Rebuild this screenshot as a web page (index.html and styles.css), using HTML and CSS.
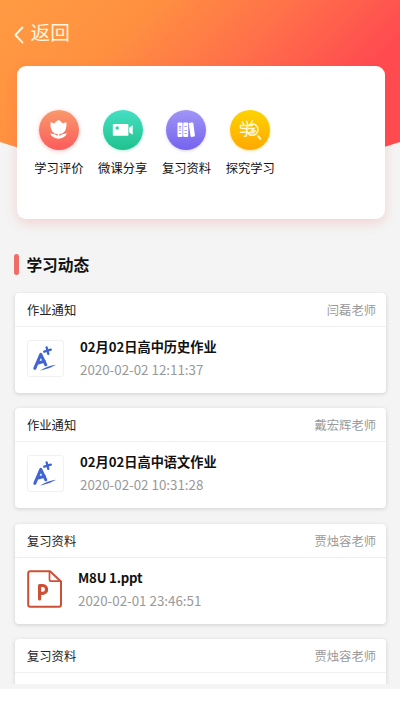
FILE: index.html
```html
<!DOCTYPE html>
<html lang="zh-CN">
<head>
<meta charset="utf-8">
<title>学习动态</title>
<link rel="stylesheet" href="styles.css">
</head>
<body>
<div class="page">
  <div class="backdrop"></div>
  <header class="nav">
    <svg class="chevron" width="10" height="18" viewBox="0 0 10 18"><path d="M8.4 1.5 1.4 9l7 7.4"/></svg>
    <span>返回</span>
  </header>
  <nav class="menu">
    <div class="entry">
      <div class="disc coral"><svg width="40" height="40" viewBox="0 0 40 40">
        <path fill="#fff" d="M11.600 12.200c1.500.1 2.700.6 3.700 1.400.9-1.600 2.400-2.900 4.200-3.600 1.800.7 3.300 2 4.200 3.600 1-.8 2.200-1.300 3.700-1.400.5 6.600-1.200 11.200-7 11.800v2c1.600-1.600 4-2.500 7.600-2.500-1.700 3.300-4.700 5.100-8.500 5.200-3.800-.1-6.800-1.900-8.500-5.200 3.600 0 6 .9 7.600 2.500v-2c-5.800-.6-7.500-5.200-7-11.800z"/></svg></div>
      <span>学习评价</span>
    </div>
    <div class="entry">
      <div class="disc green"><svg width="40" height="40" viewBox="0 0 40 40">
        <path fill="#fff" fill-rule="evenodd" d="M10.500 14h14.200q.7 0 .7.700v10.400q0 .7-.7.700H10.500q-.7 0-.7-.7V14.700q0-.7.700-.7zm3.700 2.300a1.700 1.700 0 1 0 0 3.400 1.700 1.700 0 0 0 0-3.400zM29.700 15.300v9.400l-3.400-2.200v-5z"/></svg></div>
      <span>微课分享</span>
    </div>
    <div class="entry">
      <div class="disc violet"><svg width="40" height="40" viewBox="0 0 40 40">
        <g fill="#fff"><rect x="11.500" y="12.600" width="5" height="14.400" rx="1"/><rect x="17.200" y="12.600" width="5" height="14.400" rx="1"/><rect x="23.700" y="12.600" width="4.500" height="14.200" rx="1" transform="rotate(-8 26 20)"/></g>
        <path fill="none" stroke="#7d70ed" stroke-width=".7" d="M12.800 16.500h2.400M12.800 18h2.400M12.800 20.200h2.400M12.800 23.500h2.400M18.500 16.500h2.400M18.500 20.500h2.400M18.500 23.500h2.400"/></svg></div>
      <span>复习资料</span>
    </div>
    <div class="entry">
      <div class="disc gold"><svg width="40" height="40" viewBox="0 0 40 40">
        <g fill="none" stroke="#fff7d0" stroke-width="1.500" stroke-linecap="round"><path d="M12.500 12.200l1.200 2.500M16.600 11.300l1 3M22.300 11l-2 3.500M10.400 18v-2.500h12M11.500 18.500h7M10.300 22.200h8M16.500 18.500v6.800q0 1.200-2 .8M19 18.500h5l-2.500 2.500h4M19 22.800h5"/><circle cx="22.300" cy="19.600" r="5.700"/><path stroke-width="2" d="M28.200 26.200l2.200 2.600"/></g></svg></div>
      <span>探究学习</span>
    </div>
  </nav>
  <h2 class="section">学习动态</h2>
  <main class="feed">
    <article class="card">
      <div class="card-head"><span>作业通知</span><span class="teacher">闫磊老师</span></div>
      <div class="card-body">
        <div class="thumb"><svg width="36" height="36" viewBox="0 0 36 36"><g fill="none" stroke="#4065d2" stroke-linecap="round" stroke-linejoin="round"><path stroke-width="3" d="M6.800 27.300 12.800 13.300 17.800 23.800M9 22.300l7.500-2"/><path stroke-width="2.300" d="M18.600 6.300l1.700 6.600M16.200 10.600l6.600-2"/></g><path fill="#4065d2" d="M12 29.800q7-5 16.300-6-7 4.200-16.300 6z"/></svg></div>
        <div class="info"><h3>02月02日高中历史作业</h3><time>2020-02-02 12:11:37</time></div>
      </div>
    </article>
    <article class="card">
      <div class="card-head"><span>作业通知</span><span class="teacher">戴宏辉老师</span></div>
      <div class="card-body">
        <div class="thumb"><svg width="36" height="36" viewBox="0 0 36 36"><g fill="none" stroke="#4065d2" stroke-linecap="round" stroke-linejoin="round"><path stroke-width="3" d="M6.800 27.300 12.800 13.300 17.800 23.800M9 22.300l7.500-2"/><path stroke-width="2.300" d="M18.600 6.300l1.700 6.600M16.200 10.600l6.600-2"/></g><path fill="#4065d2" d="M12 29.800q7-5 16.300-6-7 4.200-16.300 6z"/></svg></div>
        <div class="info"><h3>02月02日高中语文作业</h3><time>2020-02-02 10:31:28</time></div>
      </div>
    </article>
    <article class="card">
      <div class="card-head"><span>复习资料</span><span class="teacher">贾烛容老师</span></div>
      <div class="card-body file">
        <svg class="ppt" width="36" height="38" viewBox="0 0 36 38"><g fill="none" stroke="#cb5036" stroke-width="2" stroke-linejoin="round"><path d="M3.200 1.300H23L34 11.500V34.800q0 2-2 2H3.200q-2 0-2-2V3.300q0-2 2-2z"/><path stroke-width="1.700" d="M22.500 1.800v7.700q0 1.700 1.700 1.700h9.300"/></g><path fill="none" stroke="#cb5036" stroke-width="3.200" stroke-linecap="round" stroke-linejoin="round" d="M12.600 29V15.500h3.200c5 0 5 7.800 0 7.800h-3.200"/></svg>
        <div class="info"><h3>M8U 1.ppt</h3><time>2020-02-01 23:46:51</time></div>
      </div>
    </article>
    <article class="card">
      <div class="card-head"><span>复习资料</span><span class="teacher">贾烛容老师</span></div>
      <div class="card-body"></div>
    </article>
  </main>
</div>
</body>
</html>
```

FILE: styles.css
```css
* { box-sizing: border-box; margin: 0; padding: 0; }
body {
  height: 711px;
  overflow: hidden;
  background: #fff;
  color: #111;
  font-family: "Noto Sans CJK SC", sans-serif;
}
.page {
  position: relative;
  height: 689px;
  overflow: hidden;
  background: #f4f4f4;
}
.backdrop {
  position: absolute;
  inset: 0 0 auto;
  height: 205px;
  background: linear-gradient(135deg, #ff9a42 0%, #ff9141 25%, #ff704a 49%, #ff4b50 72%, #ff4b50 100%);
  clip-path: polygon(0 0, 100% 0, 100% 142px, 50% 205px, 0 142px);
}
.nav {
  position: relative;
  display: flex;
  align-items: center;
  gap: 6.500px;
  height: 66px;
  padding-left: 14px;
  color: #fff5dc;
  font-size: 19.700px;
  line-height: 30px;
}
.nav span { margin-bottom: 2px; }
.chevron {
  margin-top: 4px;
  fill: none;
  stroke: #fff5dc;
  stroke-width: 2;
  stroke-linecap: round;
  stroke-linejoin: round;
}
.menu {
  position: relative;
  display: flex;
  align-items: flex-start;
  height: 153px;
  margin: 0 15.500px 0 16.500px;
  padding: 44px 0 0 10.500px;
  border-radius: 9px;
  background: #fff;
  box-shadow: 0 4px 12px rgba(240, 70, 70, .19);
}
.entry {
  display: flex;
  flex-direction: column;
  align-items: center;
  gap: 9px;
  width: 63.800px;
  font-size: 12.300px;
  line-height: 18px;
  white-space: nowrap;
}
.disc {
  width: 40px;
  height: 40px;
  border-radius: 50%;
}
.disc svg { display: block; }
.coral { background: linear-gradient(#f89a6c, #fc5b5b); box-shadow: 0 1px 4px rgba(252, 91, 91, .4); }
.green { background: linear-gradient(#45dfc2, #20c28f); box-shadow: 0 1px 3px rgba(32, 194, 143, .3); }
.violet { background: linear-gradient(#a195f5, #7463ee); box-shadow: 0 1px 3px rgba(116, 99, 238, .3); }
.gold { background: linear-gradient(#fdd300, #ffa800); box-shadow: 0 1px 3px rgba(255, 185, 0, .4); }
.section {
  display: flex;
  align-items: center;
  gap: 7px;
  height: 22px;
  margin: 34px 0 17px 14.400px;
  font-size: 15.700px;
  font-weight: 700;
}
.section::before {
  content: "";
  width: 5px;
  height: 21px;
  border-radius: 2.500px;
  background: #ee6d69;
}
.feed {
  display: flex;
  flex-direction: column;
  gap: 15.600px;
  height: 392px;
  padding: 0.500px 14px 0 15px;
  overflow: hidden;
}
.card {
  flex: 0 0 100px;
  border-radius: 4px;
  background: #fff;
  box-shadow: 0 1px 4px rgba(0, 0, 0, .15);
}
.card-head {
  display: flex;
  justify-content: space-between;
  align-items: center;
  height: 34px;
  padding: 1px 10px 0 12px;
  border-bottom: 1.500px solid #efefef;
  color: #222;
  font-size: 12.300px;
}
.teacher { color: #999; }
.card-body {
  display: flex;
  align-items: center;
  gap: 16px;
  height: 66px;
  padding: 0 12px 3px;
}
.file { gap: 15px; }
.file h3 { letter-spacing: -.2px; }
.thumb {
  width: 37px;
  height: 37px;
  border: 1px solid #f1f1f1;
  border-radius: 3px;
}
.thumb svg { display: block; }
.info {
  display: flex;
  flex-direction: column;
  gap: 3px;
  line-height: 20px;
}
.info h3 { color: #111; font-size: 13.200px; font-weight: 700; }
.info time { color: #999; font-size: 13.350px; }
```
